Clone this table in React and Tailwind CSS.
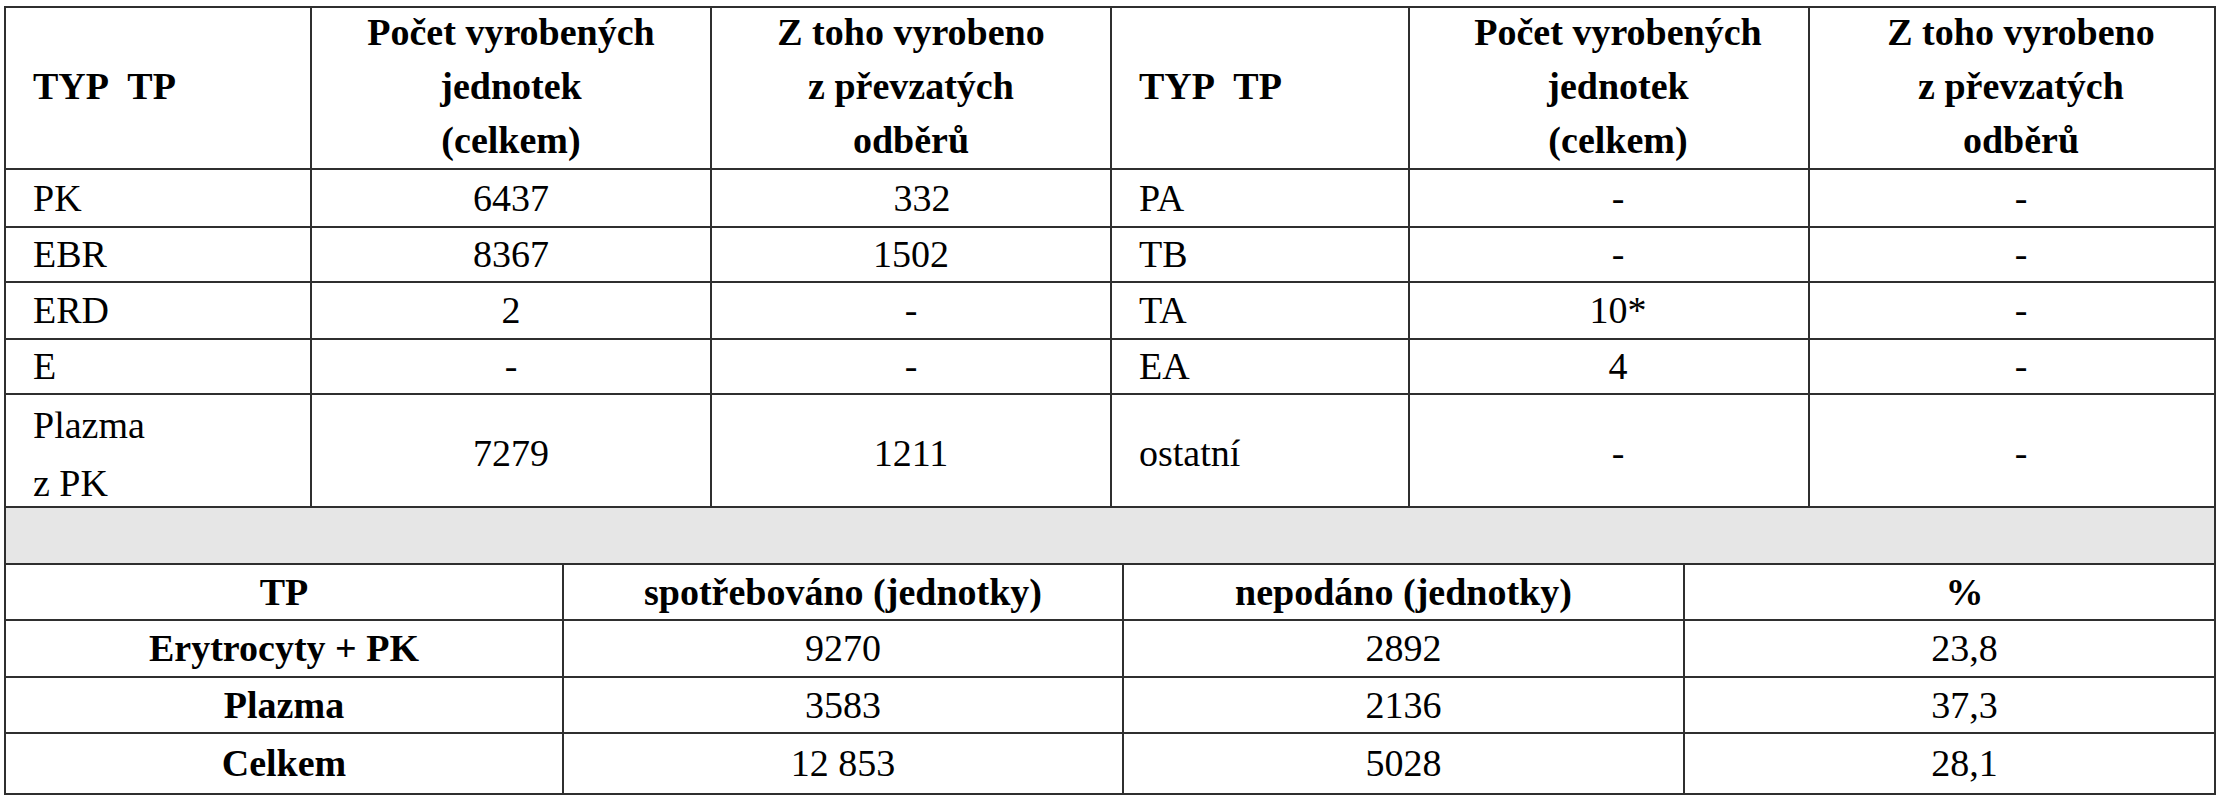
import React from "react";

const F = "[font-family:'Liberation_Serif'] ";
const BR = F + "border-r-2 border-b-2 border-[#2f2f2f]";
const LEFT = "flex items-center justify-start pl-[27px] " + BR;
const CEN = "flex items-center justify-center text-center " + BR;
const CENR = "flex items-center justify-center text-center pl-[18px] " + BR;
const CENP = "flex items-center justify-center text-center pl-[30px] " + BR;

const topRows = [
  ["PK", "6437", "332", "PA", "-", "-"],
  ["EBR", "8367", "1502", "TB", "-", "-"],
  ["ERD", "2", "-", "TA", "10*", "-"],
  ["E", "-", "-", "EA", "4", "-"],
];

const bottomRows = [
  ["Erytrocyty + PK", "9270", "2892", "23,8"],
  ["Plazma", "3583", "2136", "37,3"],
  ["Celkem", "12 853", "5028", "28,1"],
];

function HeadCol({ cls, a, b, c }) {
  return (
    <div className={cls + " font-bold leading-[54px]"}>
      <div className="-mt-[4px] flex flex-col items-center">
        <span>{a}</span>
        <span>{b}</span>
        <span>{c}</span>
      </div>
    </div>
  );
}

export default function App() {
  return (
    <div className="[font-family:'Liberation_Serif']">
      <div className="w-[2222px] h-[800px] bg-white pl-[4px] pt-[6px] text-[38px] text-black">
        <div className="w-[2212px] border-l-2 border-t-2 border-[#2f2f2f]">
          <div className="grid grid-cols-[306px_400px_400px_298px_400px_406px] grid-rows-[162px_58px_55px_57px_55px_113px]">
            <div className={LEFT + " font-bold"}>
              <span className="-mt-[4px]">TYP&nbsp; TP</span>
            </div>
            <HeadCol cls={CEN} a="Počet vyrobených" b="jednotek" c="(celkem)" />
            <HeadCol cls={CEN} a="Z toho vyrobeno" b="z převzatých" c="odběrů" />
            <div className={LEFT + " font-bold"}>
              <span className="-mt-[4px]">TYP&nbsp; TP</span>
            </div>
            <HeadCol cls={CENR} a="Počet vyrobených" b="jednotek" c="(celkem)" />
            <HeadCol cls={CENR} a="Z toho vyrobeno" b="z převzatých" c="odběrů" />

            {topRows.map((r, i) => (
              <React.Fragment key={i}>
                <div className={LEFT}>{r[0]}</div>
                <div className={CEN}>{r[1]}</div>
                <div className={CEN}>
                  {r[2] === "332" ? <span className="ml-[22px]">{r[2]}</span> : r[2]}
                </div>
                <div className={LEFT}>{r[3]}</div>
                <div className={CENR}>{r[4]}</div>
                <div className={CENR}>{r[5]}</div>
              </React.Fragment>
            ))}

            <div className={LEFT + " leading-[58px]"}>
              <div className="mt-[6px] flex flex-col">
                <span>Plazma</span>
                <span>z PK</span>
              </div>
            </div>
            <div className={CEN}>
              <span className="mt-[6px]">7279</span>
            </div>
            <div className={CEN}>
              <span className="mt-[6px]">1211</span>
            </div>
            <div className={LEFT}>
              <span className="mt-[6px]">ostatní</span>
            </div>
            <div className={CENR}>
              <span className="mt-[6px]">-</span>
            </div>
            <div className={CENR}>
              <span className="mt-[6px]">-</span>
            </div>
          </div>

          <div className="h-[57px] bg-[#e6e6e6] border-r-2 border-b-2 border-[#2f2f2f]"></div>

          <div className="grid grid-cols-[558px_560px_561px_531px] grid-rows-[56px_57px_56px_61px]">
            <div className={CEN + " font-bold"}>TP</div>
            <div className={CEN + " font-bold"}>spotřebováno (jednotky)</div>
            <div className={CEN + " font-bold"}>nepodáno (jednotky)</div>
            <div className={CENP + " font-bold"}>%</div>
            {bottomRows.map((r, i) => (
              <React.Fragment key={i}>
                <div className={CEN + " font-bold"}>{r[0]}</div>
                <div className={CEN}>{r[1]}</div>
                <div className={CEN}>{r[2]}</div>
                <div className={CENP}>{r[3]}</div>
              </React.Fragment>
            ))}
          </div>
        </div>
      </div>
    </div>
  );
}
